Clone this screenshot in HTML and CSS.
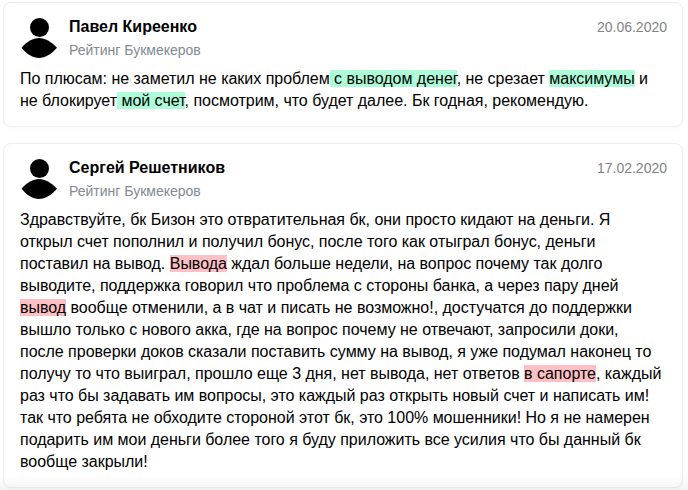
FILE: index.html
```html
<!DOCTYPE html>
<html lang="ru">
<head>
<meta charset="utf-8">
<title>Отзывы</title>
<link rel="stylesheet" href="styles.css">
</head>
<body>
<main class="reviews">
  <article class="card">
    <header class="head">
      <svg class="avatar" viewBox="0 0 36 40" aria-hidden="true"><circle cx="18.5" cy="9.5" r="9.5"/><path d="M.5 29.8C6 23.5 12 20 18 20S30 23.5 36 29.8C30 36.5 24 40 18 40S6 36.5 .5 29.8Z"/></svg>
      <div class="who">
        <div class="name">Павел Киреенко</div>
        <div class="source">Рейтинг Букмекеров</div>
      </div>
      <time class="date">20.06.2020</time>
    </header>
    <p class="text">По плюсам: не заметил не каких проблем<mark class="good"> с выводом денег</mark>, не срезает <mark class="good">максимумы</mark> и не блокирует<mark class="good"> мой счет</mark>, посмотрим, что будет далее. Бк годная, рекомендую.</p>
  </article>
  <article class="card">
    <header class="head">
      <svg class="avatar" viewBox="0 0 36 40" aria-hidden="true"><circle cx="18.5" cy="9.5" r="9.5"/><path d="M.5 29.8C6 23.5 12 20 18 20S30 23.5 36 29.8C30 36.5 24 40 18 40S6 36.5 .5 29.8Z"/></svg>
      <div class="who">
        <div class="name">Сергей Решетников</div>
        <div class="source">Рейтинг Букмекеров</div>
      </div>
      <time class="date">17.02.2020</time>
    </header>
    <p class="text">Здравствуйте, бк Бизон это отвратительная бк, они просто кидают на деньги. Я открыл счет пополнил и получил бонус, после того как отыграл бонус, деньги поставил на вывод. <mark class="bad">Вывода</mark> ждал больше недели, на вопрос почему так долго выводите, поддержка говорил что проблема с стороны банка, а через пару дней <mark class="bad">вывод</mark> вообще отменили, а в чат и писать не возможно!, достучатся до поддержки вышло только с нового акка, где на вопрос почему не отвечают, запросили доки, после проверки доков сказали поставить сумму на вывод, я уже подумал наконец то получу то что выиграл, прошло еще 3 дня, нет вывода, нет ответов <mark class="bad">в сапорте</mark>, каждый раз что бы задавать им вопросы, это каждый раз открыть новый счет и написать им! так что ребята не обходите стороной этот бк, это 100% мошенники! Но я не намерен подарить им мои деньги более того я буду приложить все усилия что бы данный бк вообще закрыли!</p>
  </article>
</main>
</body>
</html>
```
FILE: styles.css
```css
html, body {
  margin: 0;
  height: 100%;
  overflow: hidden;
  background: #fff;
}
body {
  font-family: "Liberation Sans", Arial, sans-serif;
  color: #000;
}
.reviews {
  display: flex;
  flex-direction: column;
  gap: 16px;
  padding: 2px 5px 0 3px;
}
.reviews::after {
  content: "";
  position: fixed;
  left: 0;
  right: 0;
  bottom: 0;
  height: 14px;
  background: linear-gradient(rgba(0, 0, 0, 0), rgba(0, 0, 0, .045));
  pointer-events: none;
}
.card {
  background: #fff;
  border: 1px solid #eee;
  border-radius: 8px;
  padding: 15px 15px 14px 16px;
  box-shadow: 0 1px 3px rgba(0, 0, 0, .04);
}
.head {
  display: flex;
  align-items: flex-start;
}
.avatar {
  width: 36px;
  height: 40px;
  margin-left: 1px;
  flex: none;
  fill: #000;
}
.who {
  margin-left: 12px;
  flex: 1;
}
.name {
  font-size: 16px;
  font-weight: 700;
  line-height: 18px;
}
.source {
  margin-top: 6px;
  font-size: 14px;
  line-height: 16px;
  color: #828a92;
}
.date {
  font-size: 14px;
  line-height: 18px;
  color: #828282;
}
.text {
  margin: 10px 0 0;
  padding-right: 3px;
  font-size: 16px;
  line-height: 22px;
  letter-spacing: -.02px;
}
mark {
  color: inherit;
}
.good { background: #adfcd8; }
.bad { background: #ffc0c5; }
```
